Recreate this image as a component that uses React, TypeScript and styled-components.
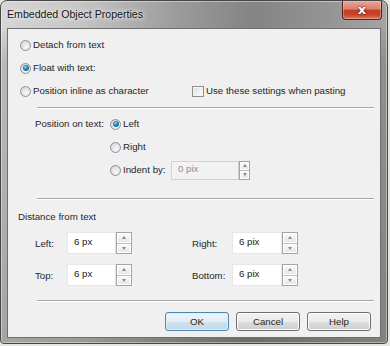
import React from "react";
import styled, { createGlobalStyle } from "styled-components";

const GlobalStyle = createGlobalStyle`
  html, body {
    margin: 0;
    padding: 0;
    background: #e4e6e2;
  }
  body {
    font-family: "Liberation Sans", Arial, sans-serif;
    font-size: 9.7px;
    color: #262626;
  }
`;

const App = () => {
  return (
    <>
      <GlobalStyle />
      <Window>
        <TitleBar>
          <Title>Embedded Object Properties</Title>
          <CloseButton>x</CloseButton>
        </TitleBar>
        <Client>
          <OptionList>
            <Row>
              <Radio />
              <Label>Detach from text</Label>
            </Row>
            <Row>
              <Radio checked />
              <Label>Float with text:</Label>
            </Row>
            <Row>
              <Radio />
              <Label width={159}>Position inline as character</Label>
              <Checkbox />
              <Label>Use these settings when pasting</Label>
            </Row>
          </OptionList>
          <Separator />

          <PositionGrid>
            <GridLabel>Position on text:</GridLabel>
            <Row>
              <Radio checked />
              <Label>Left</Label>
            </Row>
            <Row $col={2}>
              <Radio />
              <Label>Right</Label>
            </Row>
            <Row $col={2}>
              <Radio />
              <Label width={48}>Indent by:</Label>
              <TextBox width={68} height={19} disabled>
                0 pix
              </TextBox>
              <Spinner width={11} height={19} />
            </Row>
          </PositionGrid>
          <Separator $top={17} />

          <Heading>Distance from text</Heading>
          <FieldRows>
            <FieldRow>
              <Field width={157}>
                <FieldLabel width={32}>Left:</FieldLabel>
                <TextBox width={49} height={22}>6 px</TextBox>
                <Spinner width={16} height={22} />
              </Field>
              <Field>
                <FieldLabel width={40}>Right:</FieldLabel>
                <TextBox width={50} height={22}>6 pix</TextBox>
                <Spinner width={16} height={22} />
              </Field>
            </FieldRow>
            <FieldRow>
              <Field width={157}>
                <FieldLabel width={32}>Top:</FieldLabel>
                <TextBox width={49} height={22}>6 px</TextBox>
                <Spinner width={16} height={22} />
              </Field>
              <Field>
                <FieldLabel width={40}>Bottom:</FieldLabel>
                <TextBox width={50} height={22}>6 pix</TextBox>
                <Spinner width={16} height={22} />
              </Field>
            </FieldRow>
          </FieldRows>
          <Separator $top={14} />

          <ButtonBar>
            <Button $default>OK</Button>
            <Button>Cancel</Button>
            <Button>Help</Button>
          </ButtonBar>
        </Client>
      </Window>
    </>
  );
};

const Spinner = ({ width, height }: { width: number; height: number }) => (
  <SpinBox style={{ width, height }}>
    <SpinHalf>
      <ArrowUp />
    </SpinHalf>
    <SpinHalf>
      <ArrowDown />
    </SpinHalf>
  </SpinBox>
);

const Window = styled.div`
  width: 388px;
  height: 344px;
  box-sizing: border-box;
  display: flex;
  flex-direction: column;
  border: 1px solid #474747;
  border-radius: 7px 7px 4px 4px;
  padding: 0 6px 5px 6px;
  background:
    linear-gradient(180deg, rgba(0, 0, 0, 0) 0px, rgba(0, 0, 0, 0) 26px, rgba(60, 55, 55, 0.18) 60px, rgba(60, 50, 50, 0.3) 100%),
    linear-gradient(
      90deg,
      #d6d6d6 0%,
      #c6c6c6 20%,
      #9c9c9c 45%,
      #848484 65%,
      #959595 85%,
      #a4a4a4 100%
    );
  box-shadow: inset 0 0 0 1px rgba(255, 255, 255, 0.4);
  overflow: hidden;
`;

const TitleBar = styled.div`
  height: 27px;
  display: flex;
  align-items: center;
  justify-content: space-between;
  margin-right: -1px;
`;

const Title = styled.div`
  font-family: "Liberation Sans", Arial, sans-serif;
  font-size: 10.6px;
  color: #151515;
  padding: 0 4px 1px 1px;
  margin-left: -1px;
  text-shadow: 0 0 6px #f2f2f2, 0 0 3px #f2f2f2;
`;

const CloseButton = styled.div`
  align-self: flex-start;
  width: 40px;
  height: 19px;
  box-sizing: border-box;
  display: flex;
  align-items: center;
  justify-content: center;
  border: 1px solid #5b2119;
  border-top: none;
  border-radius: 0 0 4px 4px;
  background: linear-gradient(
    180deg,
    #e7a595 0%,
    #d9806a 45%,
    #c23c22 52%,
    #c6472d 78%,
    #dc7c62 100%
  );
  box-shadow: inset 0 0 0 1px rgba(255, 220, 210, 0.35);
  color: #ffffff;
  font-family: "DejaVu Sans", sans-serif;
  font-weight: bold;
  font-size: 13px;
  line-height: 1;
  padding-bottom: 2px;
  text-shadow: 0 0 2px #4a1208, 0 0 1px #4a1208;
`;

const Client = styled.div`
  flex: 1;
  display: flex;
  flex-direction: column;
  border: 1px solid #6f6f6f;
  background: #f0f0f0;
`;

const OptionList = styled.div`
  display: flex;
  flex-direction: column;
  gap: 1px;
  padding: 5px 0 0 12px;
`;

const Row = styled.div<{ $col?: number }>`
  height: 22px;
  display: flex;
  align-items: center;
  grid-column: ${(p) => p.$col ?? "auto"};
`;

const Label = styled.span<{ width?: number }>`
  width: ${(p) => (p.width ? `${p.width}px` : "auto")};
  flex-shrink: 0;
  white-space: nowrap;
  line-height: 12px;
`;

const Radio = styled.span<{ checked?: boolean }>`
  position: relative;
  width: 11px;
  height: 11px;
  box-sizing: border-box;
  border-radius: 50%;
  border: 1px solid #8f9091;
  background: radial-gradient(circle at 60% 65%, #f8f8f8 0%, #e2e2e2 55%, #cbcbcb 100%);
  margin-right: 2px;
  flex-shrink: 0;

  &::after {
    content: "";
    display: ${(p) => (p.checked ? "block" : "none")};
    position: absolute;
    left: 1.5px;
    top: 1.5px;
    width: 6px;
    height: 6px;
    border-radius: 50%;
    background: radial-gradient(circle at 40% 35%, #a8dcf4 0%, #2c8dc4 35%, #14466e 100%);
  }
`;

const Checkbox = styled.span`
  width: 12px;
  height: 11px;
  box-sizing: border-box;
  border: 1px solid #8f8f8f;
  background: linear-gradient(135deg, #dcdcdc 0%, #f2f2f2 60%, #fafafa 100%);
  box-shadow: inset 0 0 0 1px #f4f4f4;
  margin-right: 2px;
  flex-shrink: 0;
`;

const Separator = styled.div<{ $top?: number }>`
  height: 1px;
  margin: ${(p) => p.$top ?? 5}px 6px 0 29px;
  background: #a6a6a6;
  border-bottom: 1px solid #ffffff;
`;

const PositionGrid = styled.div`
  display: grid;
  grid-template-columns: 75px 1fr;
  row-gap: 1px;
  padding: 4px 0 0 27px;
`;

const GridLabel = styled.span`
  height: 22px;
  line-height: 22px;
  white-space: nowrap;
`;

const TextBox = styled.div<{ width: number; height: number; disabled?: boolean }>`
  width: ${(p) => p.width}px;
  height: ${(p) => p.height}px;
  box-sizing: border-box;
  display: flex;
  align-items: center;
  padding: 0 0 3px 6px;
  border: 1px solid ${(p) => (p.disabled ? "#d2d2d2" : "#e6e6e6")};
  background: ${(p) => (p.disabled ? "#f2f2f2" : "#ffffff")};
  color: ${(p) => (p.disabled ? "#8d8d8d" : "#1c1c1c")};
  flex-shrink: 0;
`;

const SpinBox = styled.div`
  box-sizing: border-box;
  display: flex;
  flex-direction: column;
  border: 1px solid #a4a4a4;
  background: #f3f3f3;
  flex-shrink: 0;
`;

const SpinHalf = styled.div`
  flex: 1;
  display: flex;
  align-items: center;
  justify-content: center;
  background: linear-gradient(180deg, #fbfbfb 0%, #e6e6e6 100%);
  box-shadow: inset 0 0 0 1px #ffffff;

  & + & {
    border-top: 1px solid #bcbcbc;
  }
`;

const ArrowUp = styled.span`
  width: 0;
  height: 0;
  border-left: 2.5px solid transparent;
  border-right: 2.5px solid transparent;
  border-bottom: 3px solid #8a8a8a;
`;

const ArrowDown = styled.span`
  width: 0;
  height: 0;
  border-left: 2.5px solid transparent;
  border-right: 2.5px solid transparent;
  border-top: 3px solid #8a8a8a;
`;

const Heading = styled.div`
  height: 14px;
  line-height: 14px;
  margin-top: 10px;
  padding-left: 10px;
`;

const FieldRows = styled.div`
  display: flex;
  flex-direction: column;
  gap: 10px;
  margin-top: 8px;
  padding-left: 27px;
`;

const FieldRow = styled.div`
  display: flex;
  align-items: center;
`;

const Field = styled.div<{ width?: number }>`
  display: flex;
  align-items: center;
  width: ${(p) => (p.width ? `${p.width}px` : "auto")};
`;

const FieldLabel = styled.span<{ width: number }>`
  width: ${(p) => p.width}px;
  flex-shrink: 0;
`;

const ButtonBar = styled.div`
  display: flex;
  justify-content: flex-end;
  gap: 7px;
  margin-top: 10px;
  padding-right: 9px;
`;

const Button = styled.div<{ $default?: boolean }>`
  width: 64px;
  height: 19px;
  box-sizing: border-box;
  display: flex;
  align-items: center;
  justify-content: center;
  border: 1px solid ${(p) => (p.$default ? "#4f86b0" : "#707070")};
  border-radius: 3px;
  background: ${(p) =>
    p.$default
      ? "linear-gradient(180deg, #eef5fa 0%, #e0edf6 50%, #cfe2ef 51%, #c2d9ea 100%)"
      : "linear-gradient(180deg, #f2f2f2 0%, #ebebeb 50%, #dddddd 51%, #cfcfcf 100%)"};
  box-shadow: inset 0 0 0 1px ${(p) => (p.$default ? "#dceefa" : "#fcfcfc")};
  padding-bottom: 1px;
`;

export default App;
